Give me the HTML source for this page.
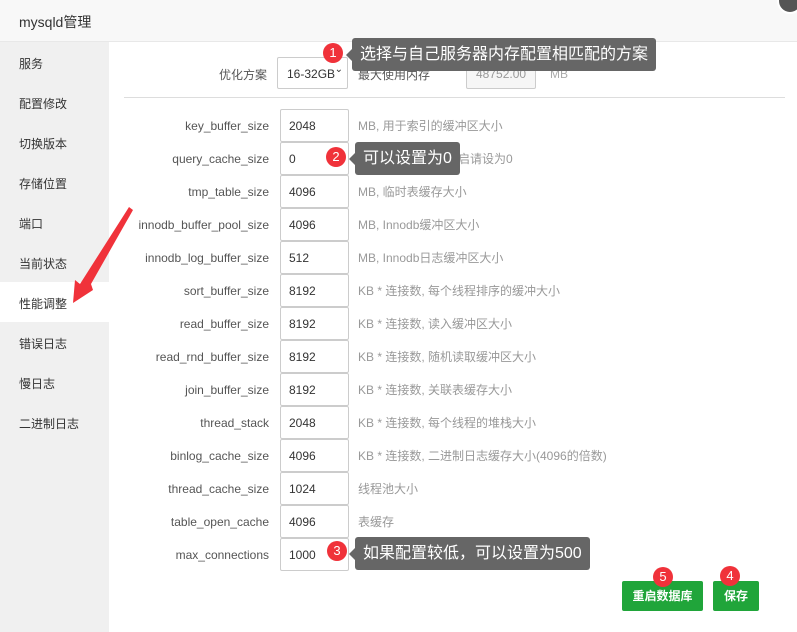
<!DOCTYPE html><html><head><meta charset="utf-8"><style>
*{margin:0;padding:0;box-sizing:border-box}
body{width:797px;height:632px;background:#fff;font-family:"Liberation Sans","Noto Sans CJK SC",sans-serif;font-size:12px;color:#555;position:relative;overflow:hidden}
.hdr{position:absolute;left:0;top:0;width:797px;height:42px;background:#f8f8f8;border-bottom:1px solid #e8e8e8;font-size:14px;color:#333;padding:12px 0 0 19px}
.side{position:absolute;left:0;top:42px;width:109px;height:590px;background:#f0f0f0}
.side .it{position:absolute;left:19px;font-size:12px;color:#333}
.act{position:absolute;left:0;top:240px;width:109px;height:40px;background:#fff}
.abs{position:absolute}
.lbl{position:absolute;right:528px;font-size:12px;color:#555;white-space:nowrap}
.inp{position:absolute;left:280px;width:69px;height:33px;border:1px solid #ccc;border-radius:2px;padding:9px 0 0 8px;color:#333;font-size:12px}
.desc{position:absolute;left:358px;color:#999;font-size:12px;white-space:nowrap;margin-top:-2px}
.tip{position:absolute;background:#666;color:#fff;font-size:16px;border-radius:3px;padding:5px 8px;white-space:nowrap;line-height:23px}
.tip:before{content:"";position:absolute;left:-6px;top:11px;border:6px solid transparent;border-left:0;border-right-color:#666}
.bd{position:absolute;width:20px;height:20px;border-radius:50%;background:#f0323a;color:#fff;font-size:13px;text-align:center;line-height:20px}
.btn{position:absolute;background:#20a53a;color:#fff;font-size:12px;font-weight:bold;border-radius:2px;text-align:center;line-height:30px;height:30px;top:581px}
</style></head><body>
<div class="hdr">mysqld管理</div>
<div class="abs" style="left:777px;top:-12px;width:26px;height:26px;border-radius:50%;background:#555;border:2px solid #fff"></div>
<div class="side"><div class="act"></div>
<div class="it" style="top:13px">服务</div><div class="it" style="top:53px">配置修改</div><div class="it" style="top:93px">切换版本</div><div class="it" style="top:133px">存储位置</div><div class="it" style="top:173px">端口</div><div class="it" style="top:213px">当前状态</div><div class="it" style="top:253px">性能调整</div><div class="it" style="top:293px">错误日志</div><div class="it" style="top:333px">慢日志</div><div class="it" style="top:373px">二进制日志</div></div>
<div class="abs" style="left:219px;top:66px;color:#555">优化方案</div>
<div class="abs" style="left:277px;top:57px;width:71px;height:32px;border:1px solid #ccc;border-radius:2px;padding:9px 0 0 9px;color:#333">16-32GB<span style="position:absolute;right:4px;top:6px;font-size:10px">⌄</span></div>
<div class="abs" style="left:358px;top:66px;color:#555">最大使用内存</div>
<div class="abs" style="left:466px;top:57px;width:70px;height:32px;border:1px solid #ccc;border-radius:2px;background:#f6f6f6;padding:9px 0 0 9px;color:#999">48752.00</div>
<div class="abs" style="left:550px;top:67px;color:#aaa">MB</div>
<div class="abs" style="left:124px;top:97px;width:661px;height:1px;background:#ddd"></div>

<div class="lbl" style="top:119px">key_buffer_size</div><div class="inp" style="top:109px">2048</div><div class="desc" style="top:119px">MB, 用于索引的缓冲区大小</div>
<div class="lbl" style="top:152px">query_cache_size</div><div class="inp" style="top:142px">0</div><div class="desc" style="top:152px">MB, 查询缓存,不开启请设为0</div>
<div class="lbl" style="top:185px">tmp_table_size</div><div class="inp" style="top:175px">4096</div><div class="desc" style="top:185px">MB, 临时表缓存大小</div>
<div class="lbl" style="top:218px">innodb_buffer_pool_size</div><div class="inp" style="top:208px">4096</div><div class="desc" style="top:218px">MB, Innodb缓冲区大小</div>
<div class="lbl" style="top:251px">innodb_log_buffer_size</div><div class="inp" style="top:241px">512</div><div class="desc" style="top:251px">MB, Innodb日志缓冲区大小</div>
<div class="lbl" style="top:284px">sort_buffer_size</div><div class="inp" style="top:274px">8192</div><div class="desc" style="top:284px">KB * 连接数, 每个线程排序的缓冲大小</div>
<div class="lbl" style="top:317px">read_buffer_size</div><div class="inp" style="top:307px">8192</div><div class="desc" style="top:317px">KB * 连接数, 读入缓冲区大小</div>
<div class="lbl" style="top:350px">read_rnd_buffer_size</div><div class="inp" style="top:340px">8192</div><div class="desc" style="top:350px">KB * 连接数, 随机读取缓冲区大小</div>
<div class="lbl" style="top:383px">join_buffer_size</div><div class="inp" style="top:373px">8192</div><div class="desc" style="top:383px">KB * 连接数, 关联表缓存大小</div>
<div class="lbl" style="top:416px">thread_stack</div><div class="inp" style="top:406px">2048</div><div class="desc" style="top:416px">KB * 连接数, 每个线程的堆栈大小</div>
<div class="lbl" style="top:449px">binlog_cache_size</div><div class="inp" style="top:439px">4096</div><div class="desc" style="top:449px">KB * 连接数, 二进制日志缓存大小(4096的倍数)</div>
<div class="lbl" style="top:482px">thread_cache_size</div><div class="inp" style="top:472px">1024</div><div class="desc" style="top:482px">线程池大小</div>
<div class="lbl" style="top:515px">table_open_cache</div><div class="inp" style="top:505px">4096</div><div class="desc" style="top:515px">表缓存</div>
<div class="lbl" style="top:548px">max_connections</div><div class="inp" style="top:538px">1000</div>

<div class="tip" style="left:352px;top:38px">选择与自己服务器内存配置相匹配的方案</div><div class="bd" style="left:323px;top:43px">1</div>
<div class="tip" style="left:355px;top:142px">可以设置为0</div><div class="bd" style="left:326px;top:147px">2</div>
<div class="tip" style="left:355px;top:537px">如果配置较低，可以设置为500</div><div class="bd" style="left:327px;top:541px">3</div>
<div class="btn" style="left:622px;width:81px">重启数据库</div>
<div class="btn" style="left:713px;width:46px">保存</div>
<div class="bd" style="left:653px;top:567px">5</div><div class="bd" style="left:720px;top:566px">4</div>
<svg class="abs" style="left:0;top:0" width="797" height="632"><path d="M129 207 L133 210 L91 284 L93 290 L73 303 L75 280 L80 284 Z" fill="#f0323a"/></svg>
</body></html>
